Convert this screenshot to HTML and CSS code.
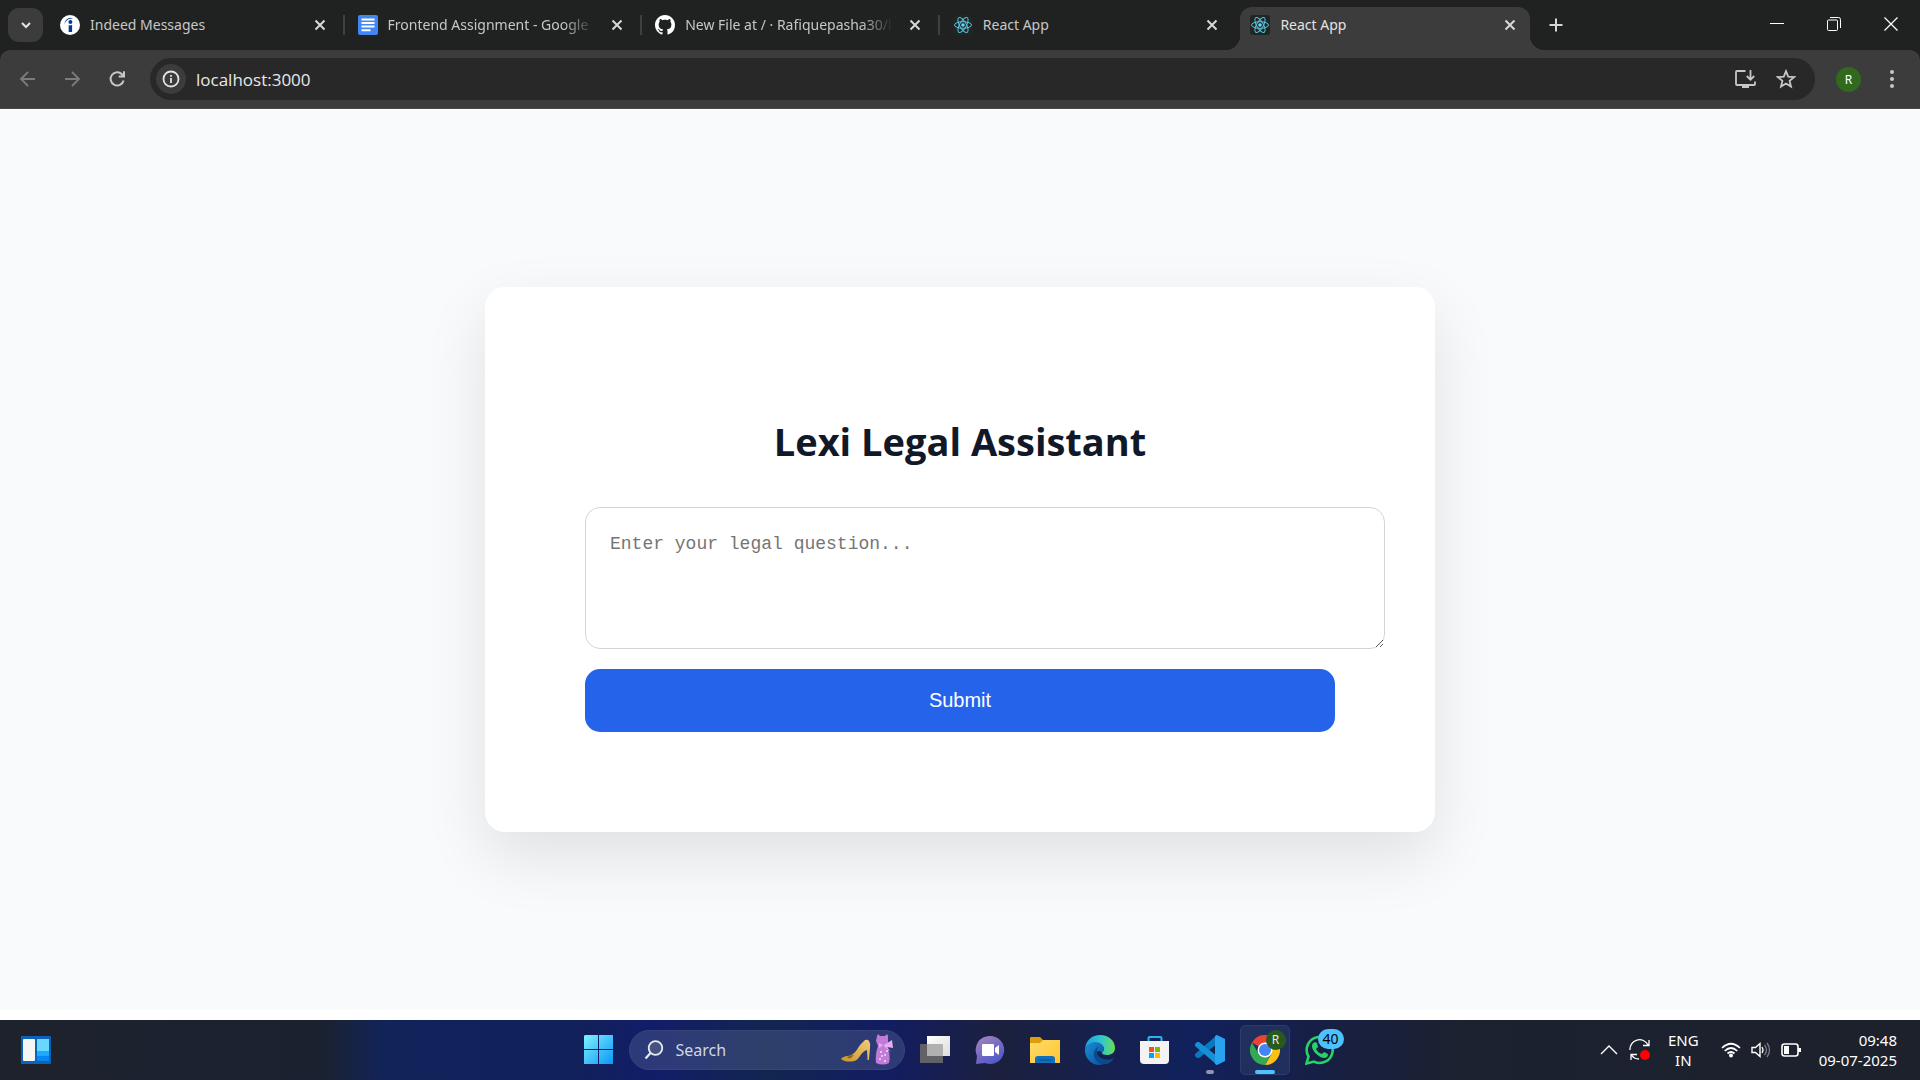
FILE: index.html
```html
<!DOCTYPE html>
<html lang="en">
<head>
<meta charset="utf-8">
<meta name="viewport" content="width=device-width, initial-scale=1">
<title>React App</title>
<link rel="stylesheet" href="styles.css">
</head>
<body>
<svg class="defs" aria-hidden="true">
  <defs>
    <symbol id="i-close" viewBox="0 0 20 20"><path d="M5.500 5.500l9 9M14.500 5.500l-9 9" fill="none" stroke="currentColor" stroke-width="2"/></symbol>
    <symbol id="i-react" viewBox="0 0 20 20">
      <rect width="20" height="20" rx="3" fill="#222526"/>
      <g fill="none" stroke="#58c4dc" stroke-width="1">
        <ellipse cx="10" cy="10" rx="8.500" ry="3.300"/>
        <ellipse cx="10" cy="10" rx="8.500" ry="3.300" transform="rotate(60 10 10)"/>
        <ellipse cx="10" cy="10" rx="8.500" ry="3.300" transform="rotate(120 10 10)"/>
      </g>
      <circle cx="10" cy="10" r="1.800" fill="#61dafb"/>
    </symbol>
  </defs>
</svg>

<header class="browser">
  <div class="tabstrip">
    <button class="tab-search" aria-label="Search tabs"><svg width="16" height="16" viewBox="0 0 16 16"><path d="M4 6l4 4 4-4" fill="none" stroke="#e3e3e3" stroke-width="2"/></svg></button>
    <nav class="tabs">
      <div class="tab">
        <svg class="favicon" viewBox="0 0 20 20"><circle cx="10" cy="10" r="10" fill="#fff"/><circle cx="10.400" cy="7" r="2" fill="#003a9b"/><path d="M8.700 10q1.700 1 3.400-.2v7.200H8.700z" fill="#003a9b"/><path d="M4.500 9C5 4.500 9 1.500 13.500 4 9 2.800 6 5 4.500 9z" fill="#003a9b"/></svg>
        <span class="tab-title">Indeed Messages</span>
        <button class="tab-close" aria-label="Close tab"><svg width="20" height="20"><use href="#i-close"/></svg></button>
      </div>
      <div class="tab">
        <svg class="favicon" viewBox="0 0 20 20"><rect width="20" height="20" rx="2" fill="#4285f4"/><path d="M3.500 4.500h13M3.500 8h13M3.500 11.500h13M3.500 15.300h9" stroke="#fff" stroke-width="2"/></svg>
        <span class="tab-title tab-title-long">Frontend Assignment - Google</span>
        <button class="tab-close" aria-label="Close tab"><svg width="20" height="20"><use href="#i-close"/></svg></button>
      </div>
      <div class="tab">
        <svg class="favicon" viewBox="0 0 16 16"><path fill="#fff" d="M8 0C3.580 0 0 3.580 0 8c0 3.540 2.290 6.530 5.470 7.590.4.070.55-.17.55-.38 0-.19-.01-.82-.01-1.490-2.010.37-2.530-.49-2.690-.94-.09-.23-.48-.94-.82-1.130-.28-.15-.68-.52-.01-.53.63-.01 1.080.58 1.230.82.72 1.210 1.870.87 2.330.66.07-.52.28-.87.510-1.070-1.780-.2-3.640-.89-3.640-3.950 0-.87.310-1.590.82-2.150-.08-.2-.36-1.020.08-2.120 0 0 .67-.21 2.200.82.64-.18 1.320-.27 2-.27s1.360.09 2 .27c1.530-1.040 2.200-.82 2.200-.82.44 1.100.16 1.920.08 2.120.51.56.82 1.270.82 2.150 0 3.070-1.870 3.750-3.650 3.950.29.25.54.73.54 1.480 0 1.070-.01 1.930-.01 2.200 0 .21.15.46.55.38A8.010 8.010 0 0 0 16 8c0-4.420-3.580-8-8-8z"/></svg>
        <span class="tab-title tab-title-long">New File at / · Rafiquepasha30/l</span>
        <button class="tab-close" aria-label="Close tab"><svg width="20" height="20"><use href="#i-close"/></svg></button>
      </div>
      <div class="tab">
        <svg class="favicon"><use href="#i-react"/></svg>
        <span class="tab-title">React App</span>
        <button class="tab-close" aria-label="Close tab"><svg width="20" height="20"><use href="#i-close"/></svg></button>
      </div>
      <div class="tab tab-active">
        <svg class="favicon"><use href="#i-react"/></svg>
        <span class="tab-title">React App</span>
        <button class="tab-close" aria-label="Close tab"><svg width="20" height="20"><use href="#i-close"/></svg></button>
      </div>
    </nav>
    <button class="new-tab" aria-label="New tab"><svg width="16" height="16" viewBox="0 0 16 16"><path d="M8 1.500v13M1.500 8h13" stroke="#d5d5d5" stroke-width="2"/></svg></button>
    <div class="window-controls">
      <button aria-label="Minimize"><svg width="14" height="14" viewBox="0 0 14 14"><path d="M0 6.500h14" stroke="#fff"/></svg></button>
      <button aria-label="Restore"><svg width="14" height="14" viewBox="0 0 14 14"><path d="M3 .5h8.500a2 2 0 0 1 2 2V11M1.500 3h8a1 1 0 0 1 1 1v8.500a1 1 0 0 1-1 1h-8a1 1 0 0 1-1-1V4a1 1 0 0 1 1-1z" fill="none" stroke="#fff"/></svg></button>
      <button aria-label="Close"><svg width="14" height="14" viewBox="0 0 14 14"><path d="M.5.5l13 13M13.500.5l-13 13" stroke="#fff" stroke-width="1.200"/></svg></button>
    </div>
  </div>
  <div class="toolbar">
    <div class="nav-buttons">
      <button aria-label="Back"><svg width="20" height="20" viewBox="0 0 20 20"><path d="M17 10H3M10 3l-7 7 7 7" fill="none" stroke="#7b7b7b" stroke-width="1.800"/></svg></button>
      <button aria-label="Forward"><svg width="20" height="20" viewBox="0 0 20 20"><path d="M2 10h14M9 3l7 7-7 7" fill="none" stroke="#7b7b7b" stroke-width="1.800"/></svg></button>
      <button aria-label="Reload"><svg width="20" height="20" viewBox="0 0 20 20"><path d="M15.600 11.500A6.600 6.600 0 1 1 14 5.300l1.500 1.800M16 2.200v5.300h-5.300" fill="none" stroke="#c7c7c7" stroke-width="2"/></svg></button>
    </div>
    <div class="omnibox">
      <button class="site-info" aria-label="Site information"><svg width="18" height="18" viewBox="0 0 18 18"><circle cx="9" cy="9" r="7.500" fill="none" stroke="#e3e3e3" stroke-width="1.800"/><path d="M9 8v5M9 5v1.800" stroke="#e3e3e3" stroke-width="1.800"/></svg></button>
      <input class="url" type="text" value="localhost:3000" aria-label="Address">
      <button aria-label="Install app"><svg width="22" height="20" viewBox="0 0 22 20"><path d="M11.500 2H3a1 1 0 0 0-1 1v12a1 1 0 0 0 1 1h17a1 1 0 0 0 1-1v-2.500" fill="none" stroke="#c7c7c7" stroke-width="1.800"/><path d="M8 16h7v3H8z" fill="#c7c7c7"/><path d="M16.500 1v9M12.800 7l3.700 3.700L20.200 7" fill="none" stroke="#c7c7c7" stroke-width="1.800"/></svg></button>
      <button aria-label="Bookmark this tab"><svg width="20" height="20" viewBox="0 0 20 20"><path d="M10 2.200l2.200 5.400 5.900.5-4.500 3.800 1.400 5.700-5-3.100-5 3.100 1.400-5.700L1.900 8.100l5.900-.5z" fill="none" stroke="#c7c7c7" stroke-width="1.800"/></svg></button>
    </div>
    <button class="profile" aria-label="Profile">R</button>
    <button class="menu" aria-label="Menu"><svg width="6" height="20" viewBox="0 0 6 20"><g fill="#c7c7c7"><circle cx="3" cy="3" r="2"/><circle cx="3" cy="10" r="2"/><circle cx="3" cy="17" r="2"/></g></svg></button>
  </div>
</header>

<main class="page">
  <form class="card">
    <h1>Lexi Legal Assistant</h1>
    <textarea class="question" placeholder="Enter your legal question..." aria-label="Legal question"></textarea>
    <button class="submit" type="button">Submit</button>
  </form>
</main>

<footer class="taskbar">
  <div class="task-left">
    <button aria-label="Widgets"><svg width="30" height="28" viewBox="0 0 30 28"><rect width="30" height="28" rx="1" fill="#0c62b6"/><rect x="2" y="3" width="12" height="22" rx="1" fill="#f5f5f5"/><path d="M16 3h12v12H16z" fill="#69d8ff"/><path d="M16 15h12v5H16z" fill="#20a7ff"/><path d="M16 20h12v5H16z" fill="#0786f2"/></svg></button>
  </div>
  <div class="task-apps">
    <button class="app" aria-label="Start"><svg width="30" height="30" viewBox="0 0 30 30"><defs><linearGradient id="win" x1="0" y1="0" x2="1" y2="1"><stop offset="0" stop-color="#80f2ff"/><stop offset="1" stop-color="#0a96f8"/></linearGradient></defs><path d="M1 0h13v14H0V1zM15 0h14v14H15zM0 15h14v14H0zM15 15h14v14H15z" fill="url(#win)"/></svg></button>
    <label class="search">
      <svg width="20" height="20" viewBox="0 0 20 20"><circle cx="11.500" cy="8" r="6.800" fill="#43527e" stroke="#e6e9f0" stroke-width="1.800"/><path d="M6.500 13l-5 5.500" stroke="#e6e9f0" stroke-width="2.200"/></svg>
      <input type="text" placeholder="Search" aria-label="Search">
      <svg width="52" height="32" viewBox="0 0 52 32"><defs><linearGradient id="gold" x1="0" y1="1" x2="1" y2="0"><stop offset="0" stop-color="#c99428"/><stop offset="1" stop-color="#f3cd78"/></linearGradient></defs><path d="M0 25q1-2 6-3 5 0 9-5 4-7 9-11 3-1 4 1 2 3 1 7l-1 12h-1.500L26 16q-4 1-7 6-3 5-8 5.500Q3 28 0 25z" fill="url(#gold)"/><path d="M6 23q3-2 7-2l-3 3q-3 1-4-1z" fill="#8c6424"/><path d="M36 2l1-2 2 2h5l2-2 1 2v6l-1 4q4 8 2 17-6 3-13 0-1-9 2-17l-2-5z" fill="#c07cd6"/><path d="M42 11l-4-2v5zM43 11l8-5 1 8-6-1 4 5-7-6z" fill="#eeaaf0"/><path d="M40 17v2M44 20v2M39 24v2M44 26v2M41 21v2M46 16v2" stroke="#f4d6ff" stroke-width="1.500"/></svg>
    </label>
    <button class="app" aria-label="Task view"><svg width="30" height="30" viewBox="0 0 30 30"><defs><linearGradient id="tv" x1="0" y1="0" x2="1" y2="1"><stop offset="0" stop-color="#fff"/><stop offset="1" stop-color="#dcdcdc"/></linearGradient></defs><path d="M0 9h23v19H0z" fill="#626266"/><path d="M7 1h23v20H7z" fill="url(#tv)"/><path d="M7 9h16v12H7z" fill="#b0b0b0"/></svg></button>
    <button class="app" aria-label="Chat"><svg width="30" height="30" viewBox="0 0 30 30"><defs><linearGradient id="chat" x1="0" y1="0" x2="0.600" y2="1"><stop offset="0" stop-color="#a886bd"/><stop offset="1" stop-color="#5059c9"/></linearGradient></defs><path d="M15 1a14 14 0 1 1-5 27L1 29l1-8A14 14 0 0 1 15 1z" fill="url(#chat)"/><rect x="7" y="9" width="12" height="12" rx="1" fill="#fff"/><path d="M20 13l4-3v10l-4-3z" fill="#fff"/></svg></button>
    <button class="app" aria-label="File Explorer"><svg width="30" height="30" viewBox="0 0 30 30"><defs><linearGradient id="folder" x1="0" y1="0" x2="1" y2="1"><stop offset="0" stop-color="#ffdc6b"/><stop offset="1" stop-color="#ffc52f"/></linearGradient></defs><path d="M0 3q0-1 1-1h9l3 3v6H0z" fill="#df9d0a"/><path d="M0 8h10l3-3h17v23H0z" fill="url(#folder)"/><path d="M5 28v-4q0-3 3-3h14q3 0 3 3v4z" fill="#1070bd"/><path d="M9 25h12" stroke="#0b4f89"/></svg></button>
    <button class="app" aria-label="Edge"><svg width="30" height="30" viewBox="0 0 30 30"><defs><linearGradient id="edge1"><stop offset="0" stop-color="#1e9fdf"/><stop offset=".55" stop-color="#32c6cf"/><stop offset="1" stop-color="#68df50"/></linearGradient><linearGradient id="edge2" x1="0" y1="0" x2="1" y2="1"><stop offset="0" stop-color="#198fd9"/><stop offset="1" stop-color="#0c4d9c"/></linearGradient></defs><path d="M0 14C1 5 7 0 15 0c9 0 15 6 15 13 0 5-4 7-8 7-3 0-5-1-5-2s2-2 2-4c0-3-4-6-9-6-4 0-8 2-10 6z" fill="url(#edge1)"/><path d="M0 14c2-4 6-7 10-7 5 0 9 3 9 7 0 2-2 3-2 4-1-3-6-3-6 2 0 4 3 8 8 9-10 4-20-5-19-15z" fill="url(#edge2)"/><path d="M14 11c-5 3-7 9-3 14 4 6 14 6 18-2-7 4-17 0-17-6 0-3 1-5 2-6z" fill="#0b4b8c"/></svg></button>
    <button class="app" aria-label="Microsoft Store"><svg width="30" height="30" viewBox="0 0 30 30"><path d="M8.500 7V3q0-1 1-1h11q1 0 1 1v4" fill="none" stroke="#28b5ed" stroke-width="2"/><path d="M0 6h29v19q0 4-4 4H4q-4 0-4-4z" fill="#f3f3f3"/><path d="M9 12h5v5H9z" fill="#f25022"/><path d="M15 12h5v5h-5z" fill="#7fba00"/><path d="M9 18h5v5H9z" fill="#00a4ef"/><path d="M15 18h5v5h-5z" fill="#ffb900"/></svg></button>
    <button class="app app-open" aria-label="Visual Studio Code"><svg width="30" height="30" viewBox="0 0 30 30"><path d="M22 0L0 19v2l2 2h2L22 9z" fill="#0878bf"/><path d="M22 30L0 11V9l2-2h2l18 14z" fill="#168fd7"/><path d="M22 0l8 4v22l-8 4-2-1V1z" fill="#27a3ef"/></svg></button>
    <button class="app app-active" aria-label="Chrome"><svg width="30" height="30" viewBox="0 0 30 30"><path d="M15 15L2 7.500A15 15 0 0 1 28 7.500H15z" fill="#ea4335"/><path d="M15 15l13-7.500A15 15 0 0 1 15 30l6.500-11.200L15 7.500h13z" fill="#fbc116"/><path d="M2 7.500A15 15 0 0 0 15 30l6.500-11.300L15 22l-6.500-3.200z" fill="#34a853"/><circle cx="15" cy="15" r="7.500" fill="#fff"/><circle cx="15" cy="15" r="6" fill="#4285f4"/></svg><span class="badge badge-user">R</span></button>
    <button class="app" aria-label="WhatsApp"><svg width="30" height="30" viewBox="0 0 30 30"><path d="M1.500 28.500l2-7A13 13 0 1 1 9 26.600z" fill="none" stroke="#25d366" stroke-width="2.600"/><path d="M10 7l2 1 1 4-2 2q2 4 6 5l2-2 4 2q0 4-4 4C13 22 7 16 7 11q0-3 3-4z" fill="#25d366"/></svg><span class="badge badge-count">40</span></button>
  </div>
  <div class="tray">
    <button class="overflow" aria-label="Show hidden icons"><svg width="18" height="18" viewBox="0 0 18 18"><path d="M1 13l8-8 8 8" fill="none" stroke="#fff" stroke-width="1.400"/></svg></button>
    <button class="update" aria-label="Update"><svg width="22" height="22" viewBox="0 0 22 22"><path d="M1 11A9.500 9.500 0 0 1 19 6M20 1v5.500h-6M2 21v-5.500h6M2.500 16Q5 20 10 20" fill="none" stroke="#fff" stroke-width="1.300"/><circle cx="16" cy="16" r="5" fill="#f00"/></svg></button>
    <div class="lang">ENG<br>IN</div>
    <div class="status">
      <svg width="20" height="18" viewBox="0 0 20 18"><g fill="none" stroke="#fff" stroke-width="1.700"><path d="M1 7Q10-1.500 19 7M3.700 10Q10 4 16.300 10M6.500 12.500Q10 9.500 13.500 12.500"/></g><circle cx="10" cy="14.500" r="2" fill="#fff"/></svg>
      <svg width="20" height="18" viewBox="0 0 20 18"><path d="M1 6.500h3.500L9 2.500v13l-4.500-4H1z" fill="none" stroke="#fff" stroke-width="1.400"/><path d="M11 6q2 3 0 6" fill="none" stroke="#fff" stroke-width="1.300"/><path d="M13.500 4q4 5 0 10M16 2q5 7 0 14" fill="none" stroke="#777c88" stroke-width="1.300"/></svg>
      <svg width="20" height="18" viewBox="0 0 20 18"><rect x="1" y="3" width="16" height="12" rx="2.500" fill="none" stroke="#fff" stroke-width="1.600"/><path d="M3 5h5v8H3zM17 7h3v4h-3z" fill="#fff"/></svg>
    </div>
    <div class="clock">09:48<br>09-07-2025</div>
  </div>
</footer>
</body>
</html>
```
FILE: styles.css
```css
* { box-sizing: border-box; }

body {
  margin: 0;
  min-height: 100vh;
  display: flex;
  flex-direction: column;
  background: #fff;
  font-family: "Noto Sans", "Open Sans", sans-serif;
}

button {
  display: flex;
  align-items: center;
  justify-content: center;
  flex: none;
  padding: 0;
  border: 0;
  background: none;
  font-family: inherit;
}

svg { display: block; flex: none; }
.defs { position: absolute; width: 0; height: 0; }

/* Browser window */
.browser { background: #202222; }

.tabstrip {
  display: flex;
  align-items: center;
  height: 50px;
  padding-left: 8px;
}

.tab-search {
  width: 35px;
  height: 34px;
  border-radius: 11px;
  background: #3c3c3c;
}

.tabs {
  display: flex;
  align-self: stretch;
  flex: 0 1 1488px;
  margin-left: 7px;
  padding-top: 7px;
}

.tab {
  position: relative;
  display: flex;
  align-items: center;
  flex: 1 1 0;
  min-width: 0;
  margin-right: 8px;
  padding: 0 10px 8px 10px;
  color: #c7c7c7;
}

.tab:not(.tab-active):not(:nth-last-child(2))::after {
  content: "";
  position: absolute;
  right: -5px;
  top: 8px;
  width: 2px;
  height: 20px;
  background: #3f4040;
}

.favicon { width: 20px; height: 20px; }

.tab-title {
  flex: 1;
  min-width: 0;
  margin: 0 12px 0 10px;
  padding-top: 1px;
  overflow: hidden;
  white-space: nowrap;
  font-size: 14px;
  line-height: 20px;
}

.tab-title-long {
  mask-image: linear-gradient(to right, #000 calc(100% - 32px), transparent);
}

.tab-close { color: #d8d8d8; }

.tab-active {
  border-radius: 12px 12px 0 0;
  background: #3c3c3c;
  color: #e3e3e3;
}

.tab-active::before,
.tab-active::after {
  content: "";
  position: absolute;
  bottom: 0;
  width: 14px;
  height: 14px;
}

.tab-active::before {
  right: 100%;
  background: radial-gradient(circle at 0 0, transparent 14px, #3c3c3c 14px);
}

.tab-active::after {
  left: 100%;
  background: radial-gradient(circle at 100% 0, transparent 14px, #3c3c3c 14px);
}

.new-tab { width: 20px; height: 20px; margin-left: 8px; }

.window-controls { display: flex; margin-left: auto; align-self: stretch; }
.window-controls button { width: 57px; padding: 0 2px 2px 0; }

.toolbar {
  display: flex;
  align-items: center;
  height: 59px;
  padding: 0 25px 0 18px;
  border-bottom: 1px solid #484848;
  border-radius: 10px 10px 0 0;
  background: #3c3c3c;
}

.nav-buttons { display: flex; gap: 25px; margin-right: 22px; }

.omnibox {
  display: flex;
  align-items: center;
  flex: 1;
  gap: 20px;
  height: 42px;
  padding: 0 19px 0 6px;
  border-radius: 21px;
  background: #282828;
}

.site-info {
  width: 30px;
  height: 30px;
  margin-right: -10px;
  border-radius: 50%;
  background: #3c3c3c;
}

.url {
  flex: 1;
  min-width: 0;
  padding: 0;
  border: 0;
  background: none;
  color: #e8e8e8;
  font: 17px "Open Sans", sans-serif;
}

.profile {
  width: 25px;
  height: 25px;
  margin: 0 28px 0 21px;
  border-radius: 50%;
  background: #33691e;
  color: #fff;
  font-size: 12px;
}

/* Application page */
.page {
  display: flex;
  align-items: center;
  justify-content: center;
  flex: 1;
  margin-bottom: 10px;
  background: #f9fafc;
}

.card {
  display: flex;
  flex-direction: column;
  width: 950px;
  padding: 100px;
  border-radius: 20px;
  background: #fff;
  box-shadow: 0 25px 63px rgba(0, 0, 0, 0.1);
}

.card h1 {
  margin: 28px 0 40px;
  color: #111827;
  font-family: "Open Sans", "Noto Sans", sans-serif;
  font-size: 38px;
  line-height: 52px;
  text-align: center;
}

.question {
  width: 800px;
  height: 142px;
  margin-bottom: 20px;
  padding: 24px;
  border: 1px solid #d1d5db;
  border-radius: 15px;
  font: 18px/24px "Liberation Mono", monospace;
}

.submit {
  padding: 20px;
  border-radius: 15px;
  background: #2563eb;
  color: #fff;
  font: 20px/23px "Liberation Sans", Arial, sans-serif;
}

/* Desktop taskbar */
.taskbar {
  display: grid;
  grid-template-columns: 1fr auto 1fr;
  align-items: center;
  height: 60px;
  padding: 0 23px 0 21px;
  background: linear-gradient(to right, #1e222d 0, #1a2231 17%, #12235a 20%, #11215a 30%, #121d68 34%, #122650 40%, #121d62 46%, #1c203e 52%, #11215c 62%, #181f40 70%, #1b2230 76%, #1d212c 100%);
}

.task-apps { display: flex; align-items: center; gap: 5px; }

.app {
  position: relative;
  width: 50px;
  height: 50px;
  border-radius: 5px;
}

.search {
  display: flex;
  align-items: center;
  gap: 12px;
  width: 276px;
  height: 40px;
  padding: 0 11px 0 14px;
  border: 1px solid #38457b;
  border-radius: 20px;
  background: rgba(110, 125, 165, 0.3);
}

.search input {
  flex: 1;
  min-width: 0;
  padding: 0;
  border: 0;
  background: none;
  font: 16px "Noto Sans", sans-serif;
}

.search input::placeholder { color: #d2d6e3; }

.app-open::after,
.app-active::after {
  content: "";
  position: absolute;
  left: 21px;
  bottom: 1px;
  width: 8px;
  height: 4px;
  border-radius: 2px;
  background: #9095ab;
}

.app-active { border: 1px solid #2b3c6e; background: #202f5d; }
.app-active::after { left: 14px; bottom: 0; width: 20px; background: #4cc2ff; }

.badge {
  position: absolute;
  top: 4px;
  height: 20px;
  border-radius: 10px;
  line-height: 20px;
}

.badge-user { right: 3px; width: 20px; background: #285a1e; color: #e4e9e2; font-size: 12px; }
.badge-count { left: 23px; width: 26px; background: #4cc2ff; color: #000; font-size: 14px; }

.tray {
  display: flex;
  align-items: center;
  justify-content: flex-end;
  color: #fff;
  font-size: 15px;
  line-height: 20px;
}

.overflow { margin-right: 11px; }
.lang { margin-left: 17px; text-align: center; }
.status { display: flex; gap: 10px; margin: 0 18px 0 22px; }
.clock { text-align: right; }
```
